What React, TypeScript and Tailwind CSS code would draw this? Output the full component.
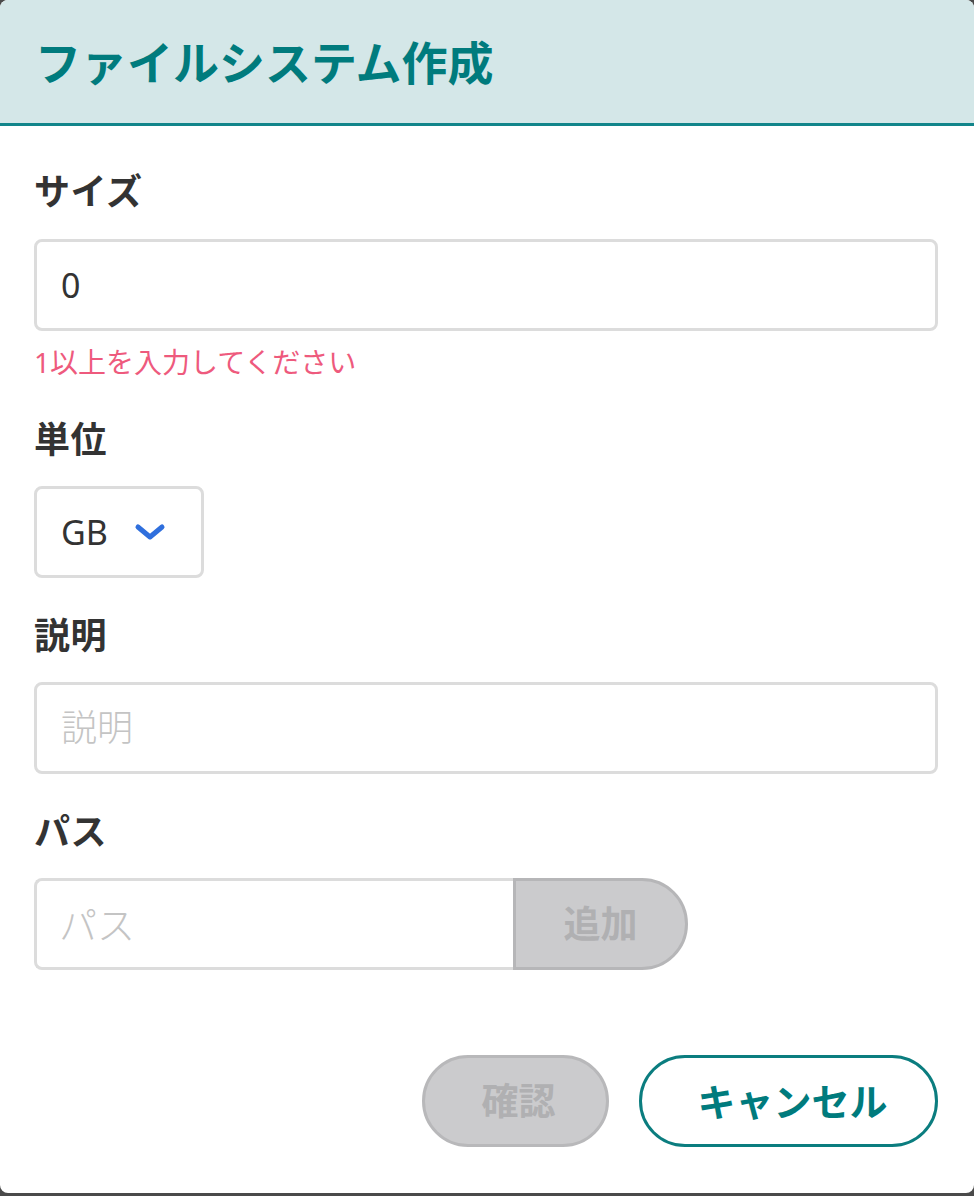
import React from "react";

const font = { fontFamily: '"Noto Sans", "Noto Sans CJK JP", sans-serif' };

function Label({ children }: { children: React.ReactNode }) {
  return (
    <div className="text-[36px] font-bold leading-[40px] tracking-[0.5px] text-[#333333]">{children}</div>
  );
}

export default function App() {
  return (
    <div className="h-[1196px] w-[974px] bg-[#4a4a4a]" style={font}>
      <div className="flex h-[1193px] w-[974px] flex-col overflow-hidden rounded-[8px] bg-white">
        <div className="flex h-[126px] shrink-0 items-center border-b-[3px] border-[#11858a] bg-[#d4e7e8] pl-[35px]">
          <h1 className="text-[46px] font-bold leading-[50px] text-[#007b7d]">ファイルシステム作成</h1>
        </div>
        <div className="flex flex-col pl-[34px] pr-[36px] pt-[46px]">
          <Label>サイズ</Label>
          <div className="mt-[27px] flex h-[92px] w-[904px] items-center rounded-[8px] border-[3px] border-[#dcdcdc] px-[24px] text-[34px] text-[#333333]">
            0
          </div>
          <div className="mt-[15px] text-[28px] leading-[32px] text-[#ee5a7d]">1以上を入力してください</div>
          <div className="mt-[42px]">
            <Label>単位</Label>
          </div>
          <div className="mt-[26px] flex h-[92px] w-[170px] items-center rounded-[8px] border-[3px] border-[#dcdcdc] pl-[24px] text-[34px] text-[#333333]">
            <span>GB</span>
            <svg className="ml-[26px]" width="32" height="20" viewBox="0 0 32 20" fill="none">
              <path d="M4 5 L16 15 L28 5" stroke="#2f6fdd" strokeWidth="5" strokeLinecap="round" strokeLinejoin="round" />
            </svg>
          </div>
          <div className="mt-[38px]">
            <Label>説明</Label>
          </div>
          <div className="mt-[26px] flex h-[92px] w-[904px] items-center rounded-[8px] border-[3px] border-[#dcdcdc] px-[24px] text-[36px] font-light text-[#c4c4c4]">
            説明
          </div>
          <div className="mt-[38px]">
            <Label>パス</Label>
          </div>
          <div className="mt-[26px] flex h-[92px] w-[654px]">
            <div className="flex h-full w-[479px] items-center rounded-l-[8px] border-[3px] border-r-0 border-[#dcdcdc] px-[22px] text-[38px] font-light text-[#c4c4c4]">
              パス
            </div>
            <div className="flex h-full w-[175px] items-center justify-center rounded-r-full border-[3px] border-[#b6b6b8] bg-[#cbcbcd] text-[37px] font-bold text-[#b0b0b2]">
              追加
            </div>
          </div>
          <div className="mt-[85px] flex justify-end gap-[30px]">
            <div className="flex h-[92px] w-[187px] items-center justify-center rounded-full border-[3px] border-[#b8b8ba] bg-[#cbcbcd] pl-[6px] text-[37px] font-bold text-[#b0b0b2]">
              確認
            </div>
            <div className="flex h-[92px] w-[299px] items-center justify-center rounded-full border-[3px] border-[#0b7d7f] bg-white pl-[8px] text-[38px] font-bold text-[#007b7d]">
              キャンセル
            </div>
          </div>
        </div>
      </div>
    </div>
  );
}
